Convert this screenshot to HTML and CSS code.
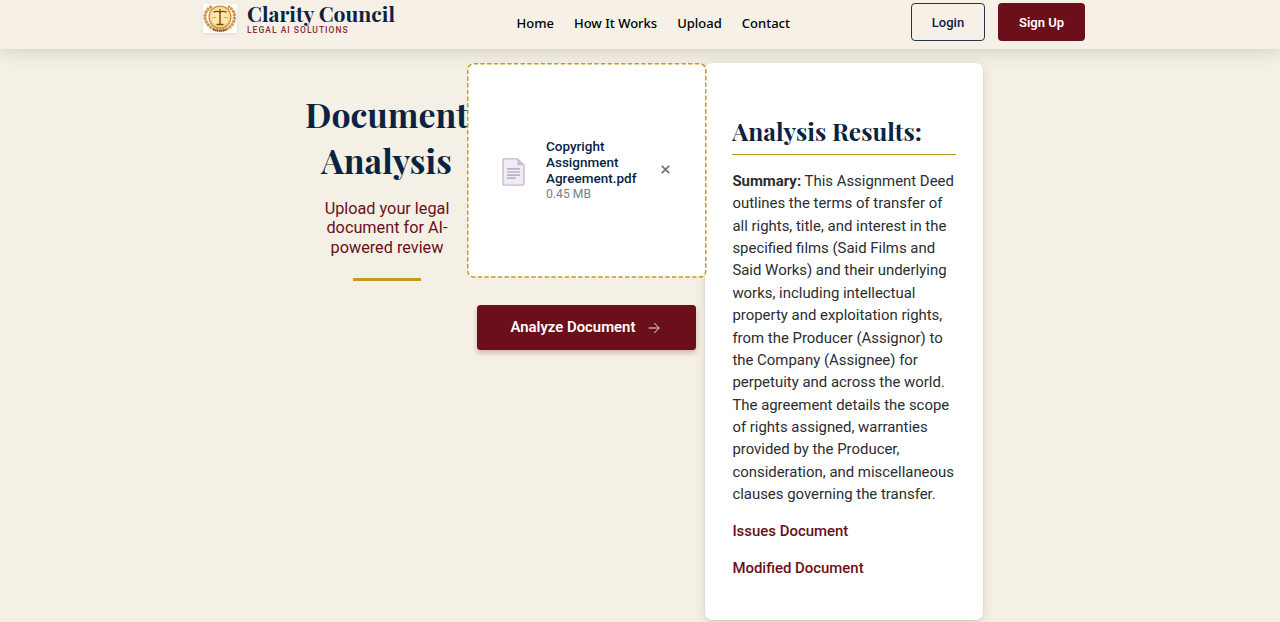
FILE: index.html
```html
<!DOCTYPE html>
<html lang="en">
<head>
<meta charset="utf-8">
<title>Clarity Council</title>
<link rel="stylesheet" href="styles.css">
</head>
<body>
<header class="header">
  <div class="brand">
    <svg class="logo" width="34" height="29" viewBox="0 0 34 29">
      <rect width="34" height="29" fill="#fff"/>
      <path d="M9 2.500C2 6 0 13 4 19S12 25.500 17 26C22 25.500 27 25 30 19S32 6 25 2.500" fill="none" stroke="#d9a65c" stroke-width="3.400" stroke-dasharray="2.600 .8"/>
      <path d="M9 2.500C2 6 0 13 4 19S12 25.500 17 26C22 25.500 27 25 30 19S32 6 25 2.500" fill="none" stroke="#b27630" stroke-width=".7"/>
      <circle cx="17" cy="13" r="11" fill="#f8d98c" stroke="#c08539" stroke-width="1.100"/>
      <circle cx="17" cy="13" r="8.500" fill="#fde8aa"/>
      <path d="M17 5V20M13.500 20.500h7M10.500 8.200Q14 6.500 17 8.200Q20 6.500 23.500 8.200" fill="none" stroke="#754315" stroke-width="1.400"/>
      <path d="M9 13h4.500q-2.250 2.500-4.500 0zM20.500 13H25q-2.250 2.500-4.500 0z" fill="#d9a84c"/>
      <path d="M10 25.500Q17 28.500 24 25.500" fill="none" stroke="#70451f" stroke-width="1.400" stroke-dasharray="1.500 .5"/>
    </svg>
    <div class="brand-text">
      <span class="brand-name">Clarity Council</span>
      <span class="brand-tag">LEGAL AI SOLUTIONS</span>
    </div>
  </div>
  <nav class="nav"><a>Home</a><a>How It Works</a><a>Upload</a><a>Contact</a></nav>
  <div class="auth"><button class="login">Login</button><button class="signup">Sign Up</button></div>
</header>
<main class="main">
  <section class="intro">
    <h1>Document Analysis</h1>
    <p>Upload your legal<br>document for AI-<br>powered review</p>
    <div class="rule"></div>
  </section>
  <section class="upload">
    <div class="dropzone">
      <svg class="dash" width="240" height="215" viewBox="0 0 240 215"><rect x=".7" y=".85" width="238.100" height="213.100" rx="6" fill="#fff" stroke="#c39b1f" stroke-width="1.500" stroke-dasharray="4.400 2.300"/></svg>
      <svg class="file-icon" width="23" height="28" viewBox="0 0 23 28">
        <path d="M2 .9H15.500L22 7V25.500Q22 27.100 20.500 27.100H2.500Q1 27.100 1 25.500V2Q1 .9 2 .9z" fill="#f1ebf6" stroke="#c4bbc9" stroke-width="1.300"/>
        <path d="M15.300 1V7.300H22z" fill="#c9bfce"/>
        <path d="M5 10.900H18M5 14H18M5 17.100H18M5 20.100H13.500" stroke="#a69bad" stroke-width="1.100"/>
      </svg>
      <div class="file-text"><span class="file-name">Copyright<br>Assignment<br>Agreement.pdf</span><span class="file-size">0.45 MB</span></div>
      <svg class="remove" width="9" height="9" viewBox="0 0 9 9"><path d="M.8.8L8.200 8.200M8.200.8L.8 8.200" stroke="#6c757d" stroke-width="1.700"/></svg>
    </div>
    <button class="analyze"><span>Analyze Document</span><svg width="12" height="12" viewBox="0 0 12 12"><path d="M.5 6H11M6.200 1L11.200 6L6.200 11" fill="none" stroke="#f0d9dc" stroke-width="1"/></svg></button>
  </section>
  <section class="results">
    <h2>Analysis Results:</h2>
    <p class="summary"><b>Summary:</b> This Assignment Deed<br>outlines the terms of transfer of<br>all rights, title, and interest in the<br>specified films (Said Films and<br>Said Works) and their underlying<br>works, including intellectual<br>property and exploitation rights,<br>from the Producer (Assignor) to<br>the Company (Assignee) for<br>perpetuity and across the world.<br>The agreement details the scope<br>of rights assigned, warranties<br>provided by the Producer,<br>consideration, and miscellaneous<br>clauses governing the transfer.</p>
    <a class="doc-link">Issues Document</a>
    <a class="doc-link">Modified Document</a>
  </section>
</main>
</body>
</html>
```
FILE: styles.css
```css
* { box-sizing: border-box; }
body { margin: 0; height: 622px; overflow: hidden; background: #f4f0e5; font-family: Roboto, "Liberation Sans", sans-serif; color: #2b2d31; }
button { font-family: inherit; padding: 0; }
.header { height: 49px; padding: 0 195px 0 203px; display: flex; align-items: flex-start; background: #f7f0e7; box-shadow: 0 3px 17px rgba(50, 45, 20, .16); }
.brand { display: flex; width: 313.500px; padding-top: 4px; }
.logo { box-shadow: 0 2px 4px rgba(0, 0, 0, .08); flex: none; }
.brand-text { display: flex; flex-direction: column; margin-left: 10px; }
.brand-name { font: bold 21.150px/22px "Playfair Display", "Liberation Serif", serif; color: #0a2342; margin-top: -2px; white-space: nowrap; }
.brand-tag { font-size: 8.500px; line-height: 9px; margin-top: 1.500px; font-weight: 500; letter-spacing: 1.020px; color: #8b2c3a; white-space: nowrap; }
.nav { display: flex; gap: 20px; width: 394.500px; padding-top: 13px; font: 500 13px/20px "Noto Sans", sans-serif; color: #000; white-space: nowrap; }
.auth { display: flex; gap: 13px; padding-top: 3px; }
.login, .signup { height: 38px; border-radius: 4px; font-size: 13px; font-weight: 500; }
.login { width: 74px; background: transparent; border: 1px solid #23344e; color: #0a2342; }
.signup { width: 87px; border: 0; background: #6b0f1a; color: #fff; font-weight: 600; }
.main { display: grid; grid-template-columns: 160px 238px 278px; padding: 14px 0 0 307px; align-items: start; }
.intro { text-align: center; padding-top: 29px; display: flex; flex-direction: column; align-items: center; }
.intro h1 { margin: 0 0 0 -1px; font: bold 33.900px/45.500px "Playfair Display", "Liberation Serif", serif; color: #0a2342; }
.intro p { margin: 15.500px 0 0; font-size: 16.250px; line-height: 19.700px; color: #6b0f1a; white-space: nowrap; }
.rule { width: 68px; height: 3px; margin-top: 20px; background: #c39b1f; }
.upload { position: relative; z-index: 1; display: flex; flex-direction: column; align-items: center; }
.dropzone { position: relative; width: 240px; height: 215px; display: flex; align-items: flex-start; padding: 75px 0 0 35px; align-self: flex-start; }
.dash { position: absolute; left: 0; top: 0; }
.file-icon { position: relative; margin-top: 20px; flex: none; }
.file-text { position: relative; width: 115px; margin-left: 21px; display: flex; flex-direction: column; }
.file-name { font-size: 13.500px; line-height: 16.200px; font-weight: 500; color: #0a2342; white-space: nowrap; }
.file-size { font-size: 12.200px; line-height: 15px; color: #7a8087; }
.remove { position: relative; margin-top: 27px; flex: none; }
.analyze { width: 219px; height: 45px; margin-top: 27px; border: 0; border-radius: 3.500px; background: #6b0f1a; color: #fff; font-size: 14.900px; font-weight: 600; display: flex; align-items: center; padding-left: 34px; gap: 13px; white-space: nowrap; box-shadow: 0 3px 5px rgba(107, 15, 26, .25); }
.analyze span { padding-bottom: 1px; }
.results { height: 557px; padding: 50px 27px 0; background: #fff; border-radius: 7px; box-shadow: 0 3px 12px rgba(60, 50, 20, .12), 0 1px 2px rgba(60, 50, 20, .12); }
.results h2 { margin: 0; height: 42px; border-bottom: 1px solid #bb9d28; font: bold 24.450px/37px "Playfair Display", "Liberation Serif", serif; color: #0a2342; white-space: nowrap; }
.summary { margin: 15px 0 0 .400px; font-size: 14.930px; line-height: 22.360px; white-space: nowrap; }
.doc-link { display: block; margin: 14.600px 0 0 .400px; font-size: 14.950px; line-height: 22.400px; font-weight: 500; color: #6b0f1a; }
```
